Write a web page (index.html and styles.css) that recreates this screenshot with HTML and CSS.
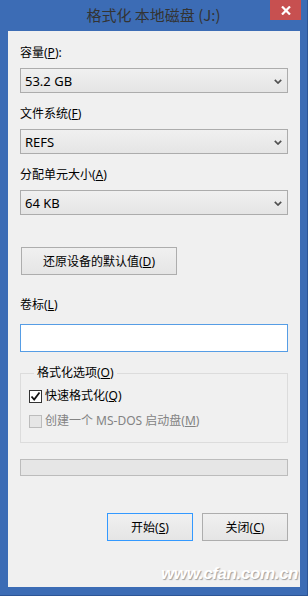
FILE: index.html
```html
<!DOCTYPE html>
<html lang="zh-CN">
<head>
<meta charset="utf-8">
<title>格式化 本地磁盘 (J:)</title>
<link rel="stylesheet" href="styles.css">
</head>
<body>
<div class="window">
  <div class="titlebar">
    <div class="title">格式化 本地磁盘 (J:)</div>
    <div class="close">
      <svg width="10" height="9" viewBox="0 0 10 9"><path d="M1 0.5 L9 8.5 M9 0.5 L1 8.5" stroke="#fff" stroke-width="2.2" fill="none"/></svg>
    </div>
  </div>
  <div class="client">
    <div class="field">
      <div class="label">容量(<u>P</u>):</div>
      <div class="combo"><span>53.2 GB</span><svg class="chev" width="8" height="5" viewBox="0 0 8 5"><path d="M0.8 0.8 L4 4 L7.2 0.8" stroke="#505050" stroke-width="1.7" fill="none"/></svg></div>
    </div>
    <div class="field">
      <div class="label">文件系统(<u>F</u>)</div>
      <div class="combo"><span>REFS</span><svg class="chev" width="8" height="5" viewBox="0 0 8 5"><path d="M0.8 0.8 L4 4 L7.2 0.8" stroke="#505050" stroke-width="1.7" fill="none"/></svg></div>
    </div>
    <div class="field">
      <div class="label">分配单元大小(<u>A</u>)</div>
      <div class="combo"><span>64 KB</span><svg class="chev" width="8" height="5" viewBox="0 0 8 5"><path d="M0.8 0.8 L4 4 L7.2 0.8" stroke="#505050" stroke-width="1.7" fill="none"/></svg></div>
    </div>
    <div class="btn restore">还原设备的默认值(<u>D</u>)</div>
    <div class="label vol">卷标(<u>L</u>)</div>
    <div class="input"></div>
    <fieldset class="group">
      <legend>格式化选项(<u>O</u>)</legend>
      <div class="check">
        <span class="box"><svg width="11" height="11" viewBox="0 0 11 11"><path d="M1.5 5.5 L4.2 8.5 L9.5 1.5" stroke="#111" stroke-width="1.8" fill="none"/></svg></span>
        <span>快速格式化(<u>Q</u>)</span>
      </div>
      <div class="check disabled">
        <span class="box"></span>
        <span>创建一个 MS-DOS 启动盘(<u>M</u>)</span>
      </div>
    </fieldset>
    <div class="progress"></div>
    <div class="actions">
      <div class="btn primary">开始(<u>S</u>)</div>
      <div class="btn">关闭(<u>C</u>)</div>
    </div>
  </div>
  <div class="watermark">www.cfan.com.cn</div>
</div>
</body>
</html>
```

FILE: styles.css
```css
html, body {
  margin: 0;
  padding: 0;
}
body {
  width: 308px;
  height: 596px;
  overflow: hidden;
  font-family: "Noto Sans", "Noto Sans CJK SC", sans-serif;
  font-size: 12px;
  color: #000;
}
u { text-decoration: underline; text-underline-offset: 1px; }
.window {
  position: relative;
  width: 308px;
  height: 596px;
  box-sizing: border-box;
  background: #3c6cb5;
  border-right: 1px solid #2c5596;
  border-bottom: 1px solid #2c5596;
  display: flex;
  flex-direction: column;
}
.titlebar {
  position: relative;
  height: 31px;
  display: flex;
  align-items: center;
  justify-content: center;
}
.title {
  font-family: "Noto Sans CJK SC", "Noto Sans", sans-serif;
  font-size: 15px;
  color: #333;
  margin-top: -2px;
}
.close {
  position: absolute;
  top: 0;
  right: 6px;
  width: 31px;
  height: 20px;
  background: #c75050;
  display: flex;
  align-items: center;
  justify-content: center;
}
.client {
  flex: 1;
  margin: 0 7px 8px 8px;
  background: #f0f0f0;
  padding: 14px 12px 0 12px;
  display: flex;
  flex-direction: column;
}
.field {
  display: flex;
  flex-direction: column;
  gap: 7px;
  margin-bottom: 13px;
}
.label {
  height: 16px;
  line-height: 16px;
}
.combo {
  height: 25px;
  box-sizing: border-box;
  border: 1px solid #acacac;
  background: linear-gradient(#f0f0f0, #e5e5e5);
  display: flex;
  align-items: center;
  justify-content: space-between;
  padding: 0 5px 0 4px;
  font-size: 13px;
}
.chev { margin-top: 1px; }
.btn {
  height: 28px;
  box-sizing: border-box;
  border: 1px solid #adadad;
  background: linear-gradient(#f0f0f0, #e5e5e5);
  display: flex;
  align-items: center;
  justify-content: center;
}
.restore {
  width: 156px;
  margin: 19px 0 0 1px;
}
.vol { margin-top: 22px; }
.input {
  margin-top: 11px;
  height: 28px;
  box-sizing: border-box;
  border: 1px solid #569de5;
  background: #fff;
}
.group {
  margin: 13px 0 0 0;
  padding: 7px 8px 13px 8px;
  border: 1px solid #dcdcdc;
  display: flex;
  flex-direction: column;
  gap: 9px;
}
.group legend {
  margin-left: 5px;
  padding: 0 3px;
  line-height: 16px;
}
.check {
  display: flex;
  align-items: center;
  gap: 3px;
  height: 16px;
  line-height: 16px;
}
.box {
  width: 13px;
  height: 13px;
  box-sizing: border-box;
  border: 1px solid #333;
  background: #fff;
  display: flex;
  align-items: center;
  justify-content: center;
}
.check.disabled { color: #838383; }
.check.disabled .box {
  border-color: #bcbcbc;
  background: #e6e6e6;
}
.progress {
  margin-top: 16px;
  height: 17px;
  box-sizing: border-box;
  border: 1px solid #bcbcbc;
  background: #e6e6e6;
}
.actions {
  margin-top: 37px;
  display: flex;
  justify-content: flex-end;
  gap: 9px;
}
.actions .btn { width: 86px; }
.btn.primary { border-color: #3399ff; }
.watermark {
  position: absolute;
  right: 9px;
  bottom: 11px;
  font-family: "Liberation Sans", sans-serif;
  font-weight: bold;
  font-style: italic;
  font-size: 17px;
  letter-spacing: -0.4px;
  color: #fff;
  text-shadow: 1px 1px 1px #a0a0a0;
}
```
